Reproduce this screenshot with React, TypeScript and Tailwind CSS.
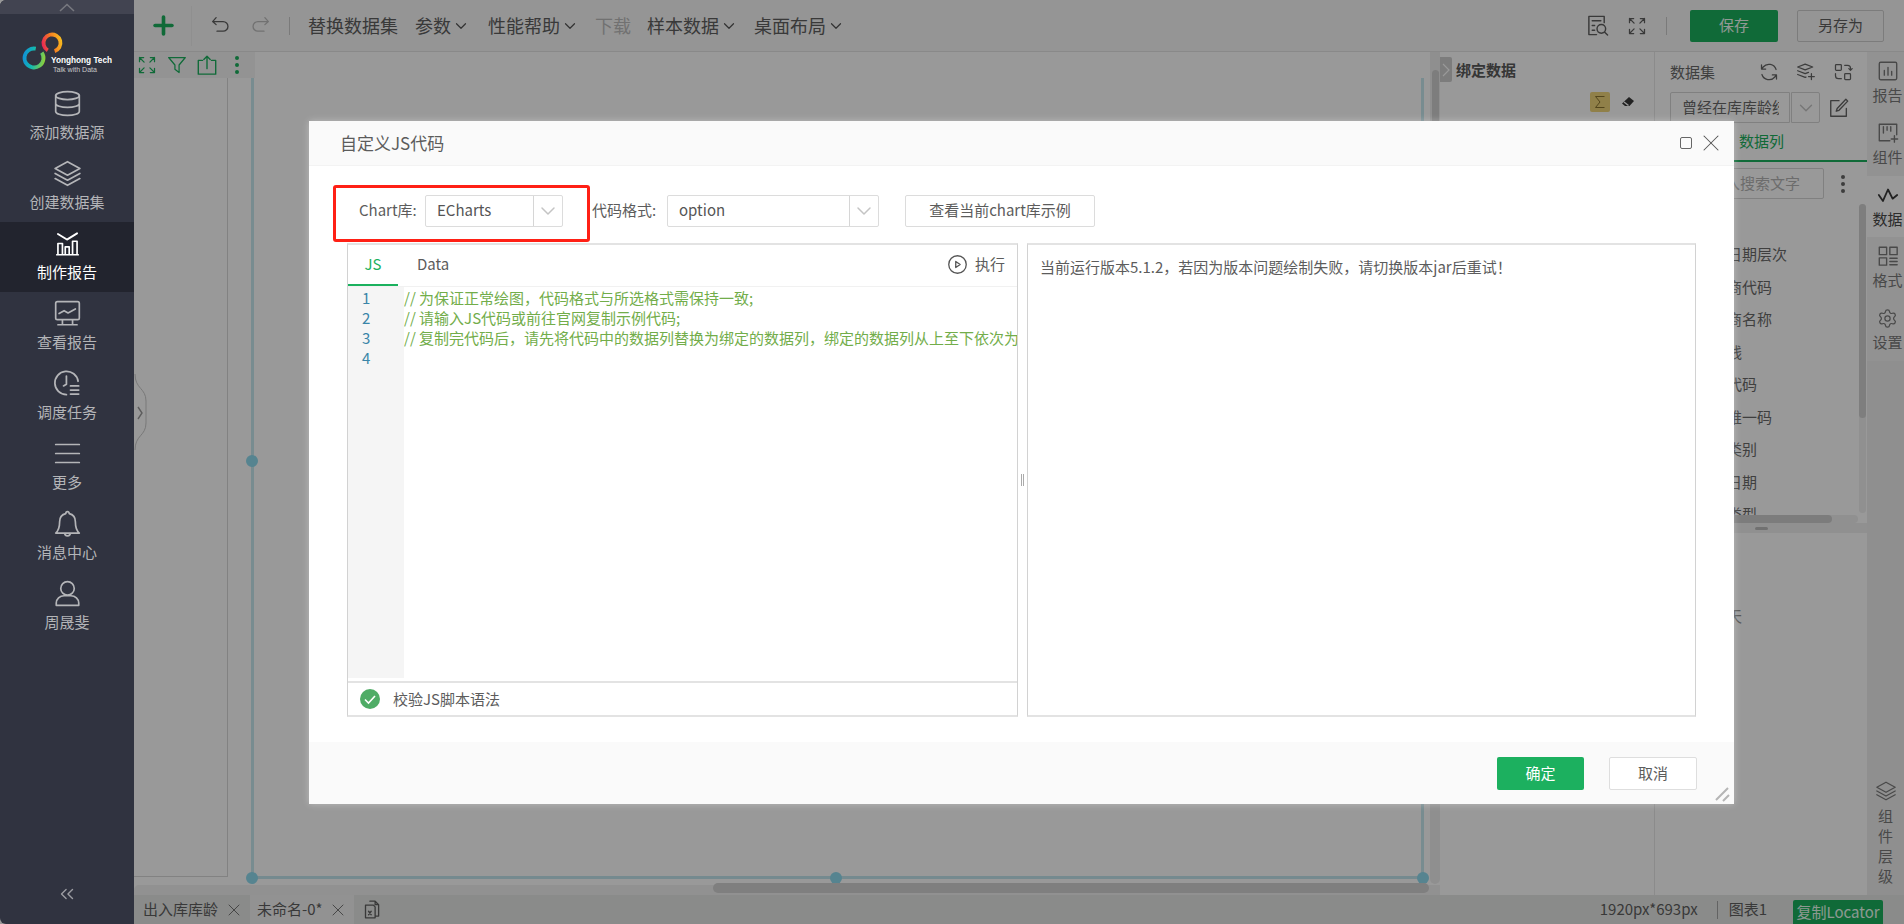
import type { ReactNode } from "react";
import { ChevronDown, ChevronsLeft, Plus, Settings, X } from "lucide-react";

function Ic({ size = 22, children, className = "" }: { size?: number; children: ReactNode; className?: string }) {
	return (
		<svg
			width={size}
			height={size}
			viewBox="0 0 24 24"
			fill="none"
			stroke="currentColor"
			strokeWidth={1.5}
			strokeLinecap="round"
			strokeLinejoin="round"
			className={`shrink-0 ${className}`}
		>
			{children}
		</svg>
	);
}

function LayersIcon({ size = 27 }: { size?: number }) {
	return (
		<Ic size={size}>
			<path d="M12 1.500 23 7.500 12 13.500 1 7.500zM1 12l11 6 11-6M1 16.500l11 6 11-6" />
		</Ic>
	);
}

function Logo() {
	return (
		<svg width="134" height="56" viewBox="0 0 134 56" className="shrink-0">
			<defs>
				<linearGradient id="ringA" x1="0" y1="0" x2="1" y2="1">
					<stop offset="0" stopColor="#1187e0" />
					<stop offset="0.45" stopColor="#12b9b0" />
					<stop offset="1" stopColor="#a6d323" />
				</linearGradient>
				<linearGradient id="ringB" x1="0" y1="0" x2="1" y2="1">
					<stop offset="0" stopColor="#f8c91e" />
					<stop offset="0.5" stopColor="#f47a22" />
					<stop offset="1" stopColor="#e5175f" />
				</linearGradient>
			</defs>
			<circle cx="34" cy="32" r="9.500" fill="none" stroke="url(#ringA)" strokeWidth="3.800" strokeDasharray="52 8" transform="rotate(-35 34 32)" />
			<circle cx="52" cy="17" r="8.500" fill="none" stroke="url(#ringB)" strokeWidth="3.800" strokeDasharray="46 8" transform="rotate(120 52 17)" />
			<text x="51" y="37" fill="#ffffff" fontSize="9" fontWeight="700" textLength={61} lengthAdjust="spacingAndGlyphs" fontFamily="'Liberation Sans',sans-serif">
				Yonghong Tech
			</text>
			<text x="53" y="46" fill="#c8c8c8" fontSize="7.500" textLength={44} lengthAdjust="spacingAndGlyphs" fontFamily="'Liberation Sans',sans-serif">
				Talk with Data
			</text>
		</svg>
	);
}

function SideItem({ icon, label, active }: { icon: ReactNode; label: string; active?: boolean }) {
	return (
		<div
			className={`flex h-[70px] flex-col items-center pt-[8px] ${active ? "bg-[#22242e] text-white" : "text-[#b4b5b8]"}`}
		>
			<div className="flex h-[26px] items-center">{icon}</div>
			<span className="mt-[6px] text-[15px] leading-[20px]">{label}</span>
		</div>
	);
}

function Sidebar() {
	return (
		<aside className="relative z-20 flex h-full w-[134px] shrink-0 flex-col overflow-hidden rounded-l-[6px] bg-[#303340]">
			<div className="flex h-[14px] items-center justify-center bg-[#424451] text-[#77787f]">
				<svg width="16" height="9" viewBox="0 0 16 9" fill="none" stroke="currentColor" strokeWidth="1.600">
					<path d="M1 8 8 1.500 15 8" />
				</svg>
			</div>
			<div className="flex h-[68px] items-start pt-[12px]">
				<Logo />
			</div>
			<SideItem
				label="添加数据源"
				icon={
					<Ic size={27}>
						<ellipse cx="12" cy="5" rx="10.500" ry="3.500" />
						<path d="M1.500 5v14c0 2 4.700 3.500 10.500 3.500s10.500-1.500 10.500-3.500V5M1.500 12c0 2 4.700 3.500 10.500 3.500s10.500-1.500 10.500-3.500" />
					</Ic>
				}
			/>
			<SideItem icon={<LayersIcon />} label="创建数据集" />
			<SideItem
				active
				label="制作报告"
				icon={
					<Ic size={27}>
						<path d="M2.500 22h19M3.500 21.500V12h4v9.500M10 21.500V15h3.500v6.500M16.500 21.500V10h4v11.500" />
						<path d="M3.500 3.500 11.500 8.500 20.500 3" strokeWidth={1.700} />
					</Ic>
				}
			/>
			<SideItem
				label="查看报告"
				icon={
					<Ic size={27}>
						<rect x="1.500" y="1.500" width="21" height="16" rx="1.500" />
						<path d="M4.500 12 9 9.500l3.500 2L19 8M7.500 18v3.500M16.500 18v3.500M3.500 22h17" />
					</Ic>
				}
			/>
			<SideItem
				label="调度任务"
				icon={
					<Ic size={28}>
						<path d="M21.500 10.500A10 10 0 1 0 11.500 22" />
						<path d="M11.500 6v7l-2.500 1.500M15 14.500h7M15 18h7M15 21.500h7" />
					</Ic>
				}
			/>
			<SideItem
				label="更多"
				icon={
					<Ic size={27}>
						<path d="M1.500 4h21M1.500 12h21M1.500 20h21" />
					</Ic>
				}
			/>
			<SideItem
				label="消息中心"
				icon={
					<Ic size={27}>
						<path d="M12 1.500c-1 0-1.500.8-1.500 1.700C6.800 4 5 7 5 10.500c0 5-1 8-3.500 10h21C20 18.500 19 15.500 19 10.500 19 7 17.200 4 13.500 3.200 13.500 2.300 13 1.500 12 1.500zM9.500 20.500a2.500 2.500 0 0 0 5 0" />
					</Ic>
				}
			/>
			<SideItem
				label="周晟斐"
				icon={
					<Ic size={27}>
						<circle cx="12" cy="7.500" r="6" />
						<path d="M2 22.500v-2a7 6.500 0 0 1 7-6.500h6a7 6.500 0 0 1 7 6.500v2z" />
					</Ic>
				}
			/>
			<div className="mt-auto flex justify-center pb-[19px] text-[#9c9da2]">
				<ChevronsLeft size={22} strokeWidth={1.500} />
			</div>
		</aside>
	);
}

function MenuItem({ label }: { label: string }) {
	return (
		<div className="flex items-center gap-[1px]">
			<span>{label}</span>
			<ChevronDown size={18} strokeWidth={1.600} className="text-[#555555]" />
		</div>
	);
}

function Toolbar() {
	return (
		<header className="flex h-[52px] shrink-0 items-center border-b border-[#e4e4e4] bg-[#f8f8f8] text-[18px] text-[#606060]">
			<div className="flex h-[40px] w-[58px] items-center border-r border-[#eeeeee] pl-[15px] text-[#1bb15e]">
				<Plus size={29} strokeWidth={3} />
			</div>
			<div className="ml-[18px] flex items-center gap-[19px]">
				<Ic size={21} className="text-[#606060]">
					<path d="M7 3 3 7.500 7 11M3.500 7.500H15a5.500 5.500 0 0 1 0 11H8" />
				</Ic>
				<Ic size={21} className="text-[#bdbdbd]">
					<path d="M17 3l4 4.500-4 3.500M20.500 7.500H9a5.500 5.500 0 0 0 0 11h7" />
				</Ic>
			</div>
			<div className="ml-[18px] h-[18px] w-px bg-[#cccccc]" />
			<div className="ml-[18px] flex items-center whitespace-nowrap">
				<span>替换数据集</span>
				<div className="ml-[17px]">
					<MenuItem label="参数" />
				</div>
				<div className="ml-[18px]">
					<MenuItem label="性能帮助" />
				</div>
				<span className="ml-[16px] text-[#bdbdbd]">下载</span>
				<div className="ml-[16px]">
					<MenuItem label="样本数据" />
				</div>
				<div className="ml-[16px]">
					<MenuItem label="桌面布局" />
				</div>
			</div>
			<div className="ml-auto flex items-center pr-[20px]">
				<Ic size={23} className="text-[#606060]">
					<path d="M19 9V2.500H3v19h8M6.500 7h9M6.500 12h2.500M6.500 17h2.500" />
					<circle cx="16" cy="15.500" r="4.500" />
					<path d="m19.500 19 3 3" />
				</Ic>
				<div className="ml-[18px] text-[#606060]">
					<Expand size={20} />
				</div>
				<div className="ml-[19px] h-[18px] w-px bg-[#cccccc]" />
				<div className="ml-[23px] flex h-[32px] w-[88px] items-center justify-center rounded-[2px] bg-[#1bb15e] text-[15px] text-[#f2fff7]">
					保存
				</div>
				<div className="ml-[19px] flex h-[32px] w-[87px] items-center justify-center rounded-[2px] border border-[#cfcfcf] text-[15px]">
					另存为
				</div>
			</div>
		</header>
	);
}

function Expand({ size = 18 }: { size?: number }) {
	return (
		<Ic size={size}>
			<path d="M3 8V3h5M3 3l5.500 5.500M16 3h5v5M21 3l-5.500 5.500M3 16v5h5M3 21l5.500-5.500M21 16v5h-5M21 21l-5.500-5.500" />
		</Ic>
	);
}

function Handle({ className }: { className: string }) {
	return <div className={`absolute h-[12px] w-[12px] rounded-full bg-[#8fdcf0] ${className}`} />;
}

function Canvas() {
	return (
		<div className="relative flex-1 overflow-hidden bg-white">
			<div className="flex h-[26px] w-[121px] items-center bg-[#f6f6f6] pl-[3px] text-[#1bb15e]">
				<Expand size={20} />
				<div className="ml-[10px]">
					<Ic size={20}>
						<path d="M2 3h20l-7.500 9v9L9.500 17v-5z" />
					</Ic>
				</div>
				<div className="ml-[9px]">
					<Ic size={22}>
						<path d="M7 7H2.500v15h19V7H17M12 16V2.500M8.500 6 12 2.500 15.500 6" />
					</Ic>
				</div>
				<div className="ml-[17px] flex flex-col gap-[3px]">
					<span className="h-[4px] w-[4px] rounded-full bg-[#1bb15e]" />
					<span className="h-[4px] w-[4px] rounded-full bg-[#1bb15e]" />
					<span className="h-[4px] w-[4px] rounded-full bg-[#1bb15e]" />
				</div>
			</div>
			{/* page edge inside the free canvas */}
			<div className="absolute left-0 top-[26px] h-[799px] w-[94px] border-b border-r border-[#d9d9d9]" />
			{/* selected chart frame */}
			<div className="absolute left-[117px] top-[26px] h-[801px] w-[1173px] border-x-[3px] border-b-[3px] border-x-[#c8eaf1] border-b-[#c4e6ee]" />
			<Handle className="left-[112px] top-[403px]" />
			<Handle className="left-[112px] top-[820px]" />
			<Handle className="left-[696px] top-[820px]" />
			<Handle className="left-[1283px] top-[820px]" />
			{/* sidebar collapse tab */}
			<svg width="14" height="76" viewBox="0 0 14 76" className="absolute left-0 top-[322px] text-[#c9c9c9]">
				<path d="M1 0C1 15 12 14 12 27V49C12 62 1 61 1 76" fill="#ffffff" stroke="currentColor" strokeWidth="1" />
				<path d="M4 33 8 39 4 45" fill="none" stroke="#9a9a9a" strokeWidth="1.400" />
			</svg>
			{/* scrollbars */}
			<div className="absolute right-0 top-0 h-[832px] w-[10px] rounded-b-[5px] bg-[#efefef]">
				<div className="ml-[2px] mt-[18px] h-[400px] w-[7px] rounded-[4px] bg-[#d0d0d0]" />
			</div>
			<div className="absolute bottom-0 left-0 right-0 h-[10px] rounded-tl-[5px] bg-[#f2f2f2]" />
			<div className="absolute bottom-[2px] left-[579px] h-[10px] w-[716px] rounded-[5px] bg-[#d4d4d4]" />
		</div>
	);
}

function BindPanel() {
	return (
		<div className="flex w-[214px] shrink-0 flex-col bg-white">
			<div className="flex h-[40px] items-start pt-[5px]">
				<div className="flex h-[25px] w-[12px] items-center justify-center rounded-r-[2px] bg-[#cfcfcf] text-white">
					<svg width="8" height="14" viewBox="0 0 8 14" fill="none" stroke="currentColor" strokeWidth="1.200">
						<path d="M1 1l6 6-6 6" />
					</svg>
				</div>
				<span className="ml-[4px] text-[15px] font-bold leading-[25px] text-[#5a5a5a]">绑定数据</span>
			</div>
			<div className="flex items-center pl-[150px]">
				<div className="flex h-[20px] w-[20px] items-center justify-center rounded-[2px] bg-[#f0d67a] text-[#8a7430]">
					<svg width="14" height="14" viewBox="0 0 14 14" fill="none" stroke="currentColor" strokeWidth="1">
						<path d="M11.500 1.500h-9L7 7l-4.500 5.500h9" />
					</svg>
				</div>
				<svg width="14" height="12" viewBox="0 0 14 12" className="ml-[11px] text-[#3a3a3a]">
					<path d="M8 1 13 5 8.500 10H4L1 7.500z" fill="currentColor" />
					<path d="M3 6l4.500 3.500" stroke="#ffffff" strokeWidth="1.400" />
				</svg>
			</div>
		</div>
	);
}

const columns = ["入库日期层次", "供应商代码", "供应商名称", "生产线", "物料代码", "物料唯一码", "物料类别", "入库日期", "物料类型"];

function DataPanel() {
	return (
		<div className="flex w-[213px] shrink-0 flex-col border-l border-[#e8e8e8] bg-white text-[15px] text-[#6a6a6a]">
			<div className="flex h-[40px] items-center pl-[15px]">
				<span>数据集</span>
				<div className="ml-[44px] flex items-center gap-[17px] text-[#666666]">
					<Ic size={20}>
						<path d="M20.500 9A9 9 0 0 0 5 6L3 8.500M3.500 15A9 9 0 0 0 19 18l2-2.500M3 3.500v5h5M21 20.500v-5h-5" />
					</Ic>
					<Ic size={20}>
						<path d="M11 2.500 20 6l-9 3.500L2 6zM2 10.500 11 14l4-1.500M2 15l9 3.500 1-.4M18.500 14v7M15 17.500h7" />
					</Ic>
					<Ic size={20}>
						<rect x="3" y="3" width="7" height="7" rx="1" />
						<rect x="14" y="14" width="7" height="7" rx="1" />
						<path d="M14 4h3.500A3.500 3.500 0 0 1 21 7.500V10M19 8l2 2 2-2M10 20H6.500A3.500 3.500 0 0 1 3 16.500V14" />
					</Ic>
				</div>
			</div>
			<div className="flex h-[31px] items-center pl-[15px]">
				<div className="flex h-[31px] w-[120px] items-center overflow-hidden whitespace-nowrap rounded-l-[2px] border border-[#d6d6d6] pl-[11px] pr-[10px]">
					<span className="block w-full overflow-hidden">曾经在库库龄统计</span>
				</div>
				<div className="ml-[1px] flex h-[31px] w-[29px] items-center justify-center rounded-r-[2px] border border-[#d6d6d6] text-[#c5c5c5]">
					<ChevronDown size={22} strokeWidth={1.500} />
				</div>
				<div className="ml-[8px] text-[#666666]">
					<Ic size={22}>
						<path d="M20 12.500V21H3V4h9M19.500 2.500l2 2L12 14.500l-3 1 1-3z" />
					</Ic>
				</div>
			</div>
			<div className="flex h-[39px] items-center border-b-[2px] border-[#1bb15e] pl-[84px] text-[#1bb15e]">数据列</div>
			<div className="mt-[6px] flex h-[31px] items-center pl-[15px]">
				<div className="flex h-[31px] w-[154px] items-center rounded-[2px] border border-[#d6d6d6] pl-[24px] text-[#b5b5b5]">
					请输入搜索文字
				</div>
				<div className="ml-[17px] flex flex-col gap-[3px]">
					<span className="h-[4px] w-[4px] rounded-full bg-[#666666]" />
					<span className="h-[4px] w-[4px] rounded-full bg-[#666666]" />
					<span className="h-[4px] w-[4px] rounded-full bg-[#666666]" />
				</div>
			</div>
			<div className="relative mt-[5px] h-[319px] shrink-0 overflow-hidden pl-[42px] pt-[34px]">
				{columns.map((c) => (
					<div key={c} className="flex h-[32.500px] items-center whitespace-nowrap">
						{c}
					</div>
				))}
				{/* covers the part of the list under the horizontal scrollbar */}
				<div className="absolute bottom-0 left-0 h-[8px] w-full bg-white" />
				<div className="absolute right-[1px] top-0 h-[309px] w-[7px] rounded-[4px] bg-[#f0f0f0]">
					<div className="h-[214px] w-[7px] rounded-[4px] bg-[#d2d2d2]" />
				</div>
				<div className="absolute bottom-0 left-0 h-[8px] w-[203px] rounded-[4px] bg-[#f0f0f0]">
					<div className="h-[8px] w-[177px] rounded-[4px] bg-[#cfcfcf]" />
				</div>
			</div>
			<div className="flex h-[10px] shrink-0 items-center justify-center bg-[#f1f1f1]">
				<div className="h-[3px] w-[13px] rounded-[2px] bg-[#bdbdbd]" />
			</div>
			<div className="pl-[72px] pt-[72px] text-[#909090]">天</div>
		</div>
	);
}

function RailItem({ icon, label, active }: { icon: ReactNode; label: string; active?: boolean }) {
	return (
		<div
			className={`flex flex-col items-center whitespace-nowrap pl-[4px] pt-[8px] text-[15px] leading-[20px] ${
				active ? "h-[61px] bg-white text-[#4a4a4a]" : "h-[62px] bg-[#f3f3f3] text-[#7a7a7a]"
			}`}
		>
			<div className="flex h-[22px] items-center">{icon}</div>
			<span className="mt-[3px]">{label}</span>
		</div>
	);
}

function Rail() {
	return (
		<div className="flex w-[37px] shrink-0 flex-col overflow-hidden bg-[#eeeeee] text-[#7a7a7a]">
			<RailItem
				label="报告"
				icon={
					<Ic size={22}>
						<rect x="2.500" y="2.500" width="19" height="19" rx="1.500" />
						<path d="M8 16.500v-5M12 16.500V8M16 16.500v-4" />
					</Ic>
				}
			/>
			<RailItem
				label="组件"
				icon={
					<Ic size={22}>
						<path d="M14 20.500H2.500v-18h19V14M7 5v7M11 5v4M15 5v5M19 15v7M15.500 18.500h7" />
					</Ic>
				}
			/>
			<RailItem
				active
				label="数据"
				icon={
					<Ic size={22} className="text-[#3a3a3a]">
						<path d="M2 12l4.500 6.500L12 6l5 10 5-4" strokeWidth={2} />
					</Ic>
				}
			/>
			<RailItem
				label="格式"
				icon={
					<Ic size={22}>
						<rect x="2.500" y="2.500" width="8" height="8" />
						<rect x="14" y="2.500" width="8" height="8" />
						<rect x="2.500" y="14" width="8" height="8" />
						<path d="M14 14.500h8M14 18h8M14 21.500h8" />
					</Ic>
				}
			/>
			<RailItem label="设置" icon={<Settings size={21} strokeWidth={1.400} />} />
			<div className="mt-auto flex flex-col items-center pb-[9px] text-[15px] leading-[20px]">
				<div className="mb-[5px]">
					<LayersIcon size={20} />
				</div>
				<span>组</span>
				<span>件</span>
				<span>层</span>
				<span>级</span>
			</div>
		</div>
	);
}

function StatusBar() {
	return (
		<footer className="flex h-[29px] shrink-0 items-center bg-[#e6e8e6] text-[15px] text-[#5f5f5f]">
			<div className="flex h-full w-[116px] items-center pl-[9px]">
				<span>出入库库龄</span>
				<X size={20} strokeWidth={1} className="ml-[6px]" />
			</div>
			<div className="flex h-full w-[104px] items-center bg-[#f3f3f3] pl-[7px]">
				<span>未命名-0*</span>
				<X size={20} strokeWidth={1} className="ml-[5px]" />
			</div>
			<div className="ml-[8px]">
				<Ic size={21}>
					<path d="M9 2.500h6l4 4v13h-4M15 2.500v4h4M4 7h9l2 2v12.500H4zM7.500 14l3 4M10.500 14l-3 4" />
				</Ic>
			</div>
			<span className="ml-auto">1920px*693px</span>
			<div className="ml-[19px] h-[18px] w-px bg-[#a5a5a5]" />
			<span className="ml-[11px]">图表1</span>
			<div className="ml-[26px] mr-[21px] mt-[5px] flex h-[24px] w-[90px] items-center justify-center whitespace-nowrap rounded-t-[2px] bg-[#1bb15e] text-[#eafff2]">
				复制Locator
			</div>
		</footer>
	);
}

function Select({ value, width }: { value: string; width: string }) {
	return (
		<div className={`flex h-[32px] items-center rounded-[2px] border border-[#dcdcdc] text-[#555555] ${width}`}>
			<span className="flex-1 pl-[11px]">{value}</span>
			<div className="flex h-full w-[29px] items-center justify-center border-l border-[#d6d6d6] text-[#c4c4c4]">
				<ChevronDown size={24} strokeWidth={1.500} />
			</div>
		</div>
	);
}

const codeLines = [
	"// 为保证正常绘图，代码格式与所选格式需保持一致;",
	"// 请输入JS代码或前往官网复制示例代码;",
	"// 复制完代码后，请先将代码中的数据列替换为绑定的数据列，绑定的数据列从上至下依次为",
	"",
];

function CodeEditor() {
	return (
		<div className="flex w-[671px] flex-col border-x border-b-2 border-t-2 border-x-[#d2d2d2] border-y-[#e3e3e3] text-[#5c5c5c]">
			<div className="flex h-[42px] shrink-0 items-stretch border-b border-[#f1f1f1]">
				<div className="flex w-[50px] items-center justify-center border-b-2 border-[#1bb15e] pb-[1px] text-[#1bb15e]">JS</div>
				<div className="ml-[19px] flex items-center pb-[2px]">Data</div>
				<div className="ml-auto flex items-center gap-[7px] pb-[2px] pr-[12px]">
					<Ic size={21} className="text-[#555555]">
						<circle cx="12" cy="12" r="10" />
						<path d="M10 8.500v7l5-3.500z" />
					</Ic>
					<span>执行</span>
				</div>
			</div>
			<div className="flex min-h-0 flex-1">
				<div className="w-[56px] shrink-0 bg-[#f5f5f5] pl-[14px] pt-[1px] leading-[20px] text-[#3a85a8]">
					<div>1</div>
					<div>2</div>
					<div>3</div>
					<div>4</div>
				</div>
				<div className="min-w-0 flex-1 overflow-hidden whitespace-nowrap pt-[1px] leading-[20px] text-[#72ad4a]">
					{codeLines.map((l, i) => (
						<div key={i} className="h-[20px]">
							{l}
						</div>
					))}
				</div>
			</div>
			<div className="mt-[3px] flex h-[34px] shrink-0 items-center border-t-2 border-[#e3e3e3] pl-[12px]">
				<svg width="20" height="20" viewBox="0 0 20 20">
					<circle cx="10" cy="10" r="10" fill="#4fac66" />
					<path d="M5 10.500 8.500 14 15 7" fill="none" stroke="#ffffff" strokeWidth="1.600" />
				</svg>
				<span className="ml-[13px]">校验JS脚本语法</span>
			</div>
		</div>
	);
}

function Modal() {
	return (
		<div className="absolute left-[309px] top-[121px] z-30 flex h-[683px] w-[1425px] flex-col bg-white text-[15px] shadow-[0_0_7px_rgba(255,255,255,0.35)]">
			<div className="flex h-[45px] shrink-0 items-center border-b border-[#f3f3f3] bg-[#fafafa] pl-[31px] pr-[9px] text-[#5c5c5c]">
				<span className="text-[17px]">自定义JS代码</span>
				<div className="ml-auto h-[12px] w-[12px] rounded-[2px] border border-[#666666]" />
				<X size={28} strokeWidth={0.900} className="ml-[5px] text-[#555555]" />
			</div>
			<div className="flex min-h-0 flex-1 flex-col px-[38px]">
				<div className="mt-[28px] flex h-[33px] shrink-0 items-center text-[#5c5c5c]">
					<span className="ml-[12px] w-[66px]">Chart库:</span>
					<Select value="ECharts" width="w-[138px]" />
					<span className="ml-[29px] w-[75px]">代码格式:</span>
					<Select value="option" width="w-[212px]" />
					<div className="ml-[26px] flex h-[32px] w-[190px] items-center justify-center rounded-[2px] border border-[#dcdcdc]">
						查看当前chart库示例
					</div>
				</div>
				<div className="mt-[16px] flex h-[474px] shrink-0">
					<CodeEditor />
					<div className="flex w-[9px] items-center justify-center gap-px">
						<span className="h-[12px] w-px bg-[#aaaaaa]" />
						<span className="h-[12px] w-px bg-[#aaaaaa]" />
					</div>
					<div className="w-[670px] border-x border-b-2 border-t-2 border-x-[#d2d2d2] border-y-[#e3e3e3] pl-[12px] pt-[12px] leading-[20px] text-[#5c5c5c]">
						当前运行版本5.1.2，若因为版本问题绘制失败，请切换版本jar后重试！
					</div>
				</div>
			</div>
			<div className="relative flex h-[62px] shrink-0 items-center justify-end bg-[#fafafa] pr-[37px]">
				<div className="flex h-[33px] w-[87px] items-center justify-center rounded-[2px] bg-[#1cb05f] text-white">确定</div>
				<div className="ml-[25px] flex h-[33px] w-[88px] items-center justify-center rounded-[2px] border border-[#dedede] bg-white text-[#5c5c5c]">
					取消
				</div>
				<svg width="16" height="16" viewBox="0 0 16 16" className="absolute bottom-[2px] right-[3px] text-[#b5b5b5]">
					<path d="M1 14 13 2M8 15l6-6" stroke="currentColor" strokeWidth="2" />
				</svg>
			</div>
		</div>
	);
}

export default function App() {
	return (
		<div className="relative flex h-[924px] w-[1904px] overflow-hidden bg-[#999999] font-['Noto_Sans_CJK_SC','Noto_Sans',sans-serif]">
			<Sidebar />
			<div className="relative flex min-w-0 flex-1 flex-col bg-white">
				<Toolbar />
				<div className="flex min-h-0 flex-1">
					<Canvas />
					<BindPanel />
					<DataPanel />
					<Rail />
				</div>
				<StatusBar />
				{/* dialog backdrop */}
				<div className="absolute inset-0 bg-black/40" />
			</div>
			<Modal />
			{/* annotation box drawn on the screenshot */}
			<div className="absolute left-[333px] top-[185px] z-40 h-[57px] w-[257px] rounded-[3px] border-[3px] border-[#ff2015]" />
		</div>
	);
}
